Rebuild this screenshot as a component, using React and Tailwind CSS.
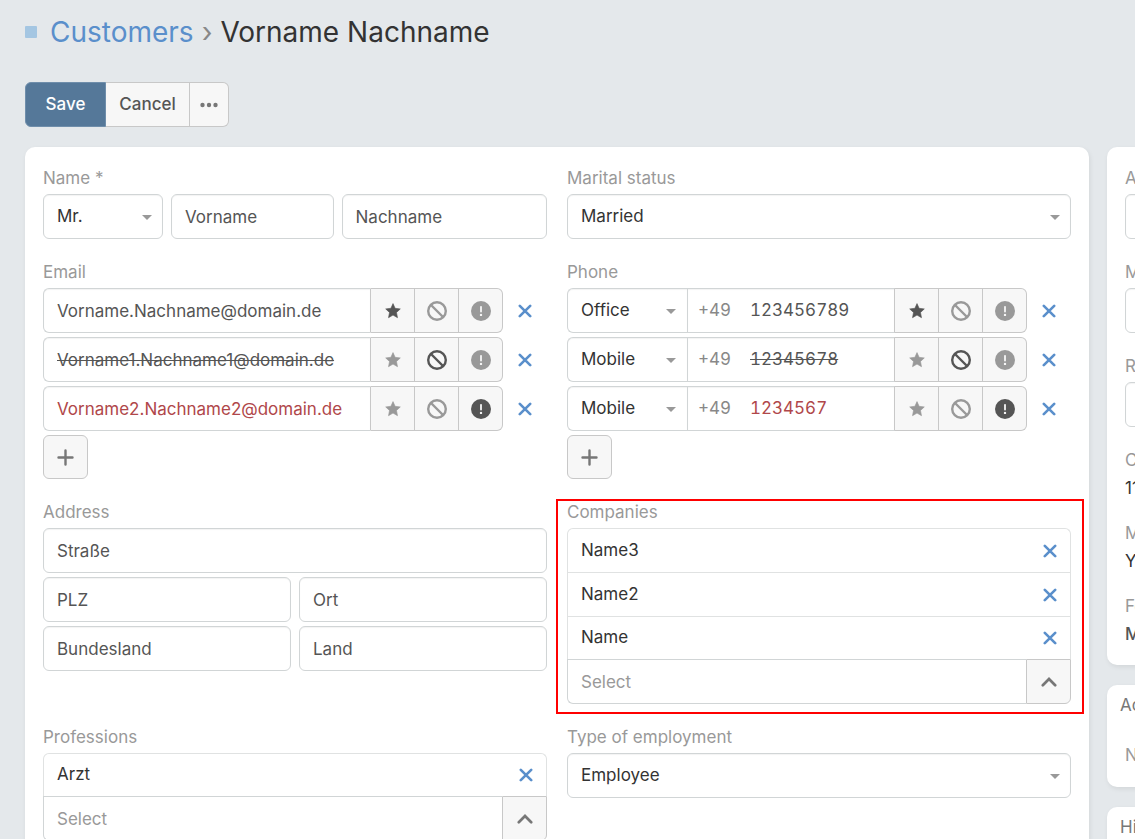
import React from "react";

const EMAILS = [
  { value: "Vorname.Nachname@domain.de", state: "primary" },
  { value: "Vorname1.Nachname1@domain.de", state: "optedOut" },
  { value: "Vorname2.Nachname2@domain.de", state: "invalid" },
];

const PHONES = [
  { type: "Office", value: "123456789", state: "primary" },
  { type: "Mobile", value: "12345678", state: "optedOut" },
  { type: "Mobile", value: "1234567", state: "invalid" },
];

const VALUE_CLS = {
  primary: "text-[#555]",
  optedOut: "text-[#555] line-through",
  invalid: "text-[#b0474a]",
};

const INPUT =
  "h-[45px] w-full min-w-0 rounded-md border border-[#d1d5d6] bg-white px-[13px] text-[#555] shadow-[inset_0_1px_1px_rgba(0,0,0,0.05)] outline-none";

/* Icons */
const StarIcon = () => (
  <svg width="18" height="18" viewBox="0 0 18 18" aria-hidden="true">
    <path
      d="M9 1.6l2.1 4.7 5.2.6-3.8 3.6 1 5.2L9 13.1l-4.5 2.6 1-5.2L1.7 6.9l5.2-.6z"
      fill="currentColor"
      stroke="currentColor"
      strokeWidth="0.6"
      strokeLinejoin="round"
    />
  </svg>
);

const BanIcon = () => (
  <svg width="20" height="20" viewBox="0 0 20 20" aria-hidden="true">
    <circle cx="10" cy="10" r="8.8" fill="none" stroke="currentColor" strokeWidth="2.4" />
    <path d="M4 4l12 12" stroke="currentColor" strokeWidth="2.4" />
  </svg>
);

const AlertIcon = () => (
  <svg width="20" height="20" viewBox="0 0 20 20" aria-hidden="true">
    <circle cx="10" cy="10" r="10" fill="currentColor" />
    <path d="M10 5.8v4.7" stroke="#f7f7f7" strokeWidth="1.8" strokeLinecap="round" />
    <circle cx="10" cy="13.9" r="1.2" fill="#f7f7f7" />
  </svg>
);

const TimesIcon = () => (
  <svg width="14" height="14" viewBox="0 0 14 14" aria-hidden="true">
    <path
      d="M1.8 1.8l10.4 10.4M12.2 1.8L1.8 12.2"
      stroke="currentColor"
      strokeWidth="2.6"
      strokeLinecap="round"
    />
  </svg>
);

const PlusIcon = () => (
  <svg width="17" height="17" viewBox="0 0 17 17" aria-hidden="true">
    <path d="M8.5 1.5v14M1.5 8.500h14" stroke="currentColor" strokeWidth="2.4" strokeLinecap="round" />
  </svg>
);

const ChevronUpIcon = () => (
  <svg width="16" height="10" viewBox="0 0 16 10" aria-hidden="true">
    <path
      d="M1.8 8.2L8 2l6.2 6.2"
      fill="none"
      stroke="currentColor"
      strokeWidth="2.7"
      strokeLinecap="round"
    />
  </svg>
);

function Field({ label, id, children }) {
  return (
    <div className="min-w-0">
      <label htmlFor={id} className="mb-1 block leading-6 text-[#999]">
        {label}
      </label>
      {children}
    </div>
  );
}

function Select({ value, className = "rounded-md", ...rest }) {
  return (
    <div className="relative">
      <select
        className={`h-[45px] w-full appearance-none border border-[#d1d5d6] bg-white px-[13px] text-[#333] shadow-[inset_0_1px_1px_rgba(0,0,0,0.05)] outline-none ${className}`}
        defaultValue={value}
        {...rest}
      >
        <option>{value}</option>
      </select>
      <svg
        className="pointer-events-none absolute top-[21px] right-[11px] text-[#999]"
        width="10"
        height="5"
        viewBox="0 0 10 5"
        aria-hidden="true"
      >
        <path d="M0 0h10L5 5z" fill="currentColor" />
      </svg>
    </div>
  );
}

function StateButtons({ state }) {
  const items = [
    { key: "primary", title: "Primary", Icon: StarIcon },
    { key: "optedOut", title: "Opted Out", Icon: BanIcon },
    { key: "invalid", title: "Invalid", Icon: AlertIcon },
  ];
  return items.map(({ key, title, Icon }) => (
    <button
      key={key}
      type="button"
      aria-label={title}
      className={`flex h-[45px] w-11 shrink-0 items-center justify-center border-y border-r border-[#c8c8c8] bg-[#f7f7f7] last:rounded-r-md ${
        key === state ? "text-[#555]" : "text-[#999]"
      }`}
    >
      <Icon />
    </button>
  ));
}

function RemoveButton({ className = "" }) {
  return (
    <button
      type="button"
      aria-label="Remove"
      className={`flex shrink-0 items-center justify-center text-[#5a8fcb] ${className}`}
    >
      <TimesIcon />
    </button>
  );
}

function AddButton({ label }) {
  return (
    <button
      type="button"
      aria-label={label}
      className="flex h-11 w-[45px] items-center justify-center rounded-md border border-[#c8c8c8] bg-[#f7f7f7] text-[#777]"
    >
      <PlusIcon />
    </button>
  );
}

function LinkMultiple({ id, items }) {
  return (
    <div>
      <ul className="rounded-t-md border-x border-t border-[#e0e2e2]">
        {items.map((name) => (
          <li
            key={name}
            className="flex h-11 items-center justify-between border-b border-[#e0e2e2] pl-[13px] text-[#333] last:h-[42px] last:border-b-0"
          >
            {name}
            <RemoveButton className="h-full w-10" />
          </li>
        ))}
      </ul>
      <div className="flex">
        <input
          id={id}
          placeholder="Select"
          className="h-[45px] min-w-0 flex-1 rounded-bl-md border border-r-0 border-[#d1d5d6] px-[13px] outline-none placeholder:text-[#999] placeholder:opacity-100"
        />
        <button
          type="button"
          aria-label="Open list"
          className="flex h-[45px] w-[45px] items-center justify-center rounded-br-md border border-[#c8c8c8] bg-[#f7f7f7] text-[#777]"
        >
          <ChevronUpIcon />
        </button>
      </div>
    </div>
  );
}

function SideValue({ label, children }) {
  return (
    <div className="leading-6">
      <div className="mb-1 text-[#999]">{label}</div>
      <div>{children}</div>
    </div>
  );
}

const CARD = "rounded-[10px] bg-white shadow-[1px_2px_5px_rgba(0,0,0,0.08)]";

export default function App() {
  return (
    <div className="h-screen overflow-hidden bg-[#e4e8eb] pl-[25px] font-['Inter',sans-serif] text-[17px] text-[#333]">
      <header className="pt-3">
        <h1 className="flex items-center text-[28px] leading-10">
          <span className="mr-[13px] size-3 rounded-[1px] bg-[#a4c6e2]" />
          <a href="#customers" className="text-[#5a8fcb]">
            Customers
          </a>
          <span className="mx-2 text-[#888]">›</span>
          Vorname Nachname
        </h1>
      </header>

      <div className="mt-[30px] mb-[20px] flex h-[45px] font-medium">
        <button type="button" className="w-[81px] rounded-l-md border border-[#6f8eab] bg-[#557899] text-white">
          Save
        </button>
        <button type="button" className="w-[84px] border-y border-r border-[#c8c8c8] bg-[#f7f7f7] text-[#555]">
          Cancel
        </button>
        <button
          type="button"
          aria-label="More actions"
          className="flex w-[39px] items-center justify-center rounded-r-md border-y border-r border-[#c8c8c8] bg-[#f7f7f7] text-[#777]"
        >
          <svg width="18" height="6" viewBox="0 0 18 6" fill="currentColor" aria-hidden="true">
            <circle cx="2.5" cy="3" r="2.2" />
            <circle cx="9" cy="3" r="2.2" />
            <circle cx="15.5" cy="3" r="2.2" />
          </svg>
        </button>
      </div>

      <div className="flex items-start gap-[18px]">
        <main className={`grid min-w-0 flex-1 grid-cols-2 gap-x-5 gap-y-[21px] px-[18px] pt-[19px] pb-5 ${CARD}`}>
          <Field label="Name *" id="firstName">
            <div className="grid grid-cols-[120px_163fr_206fr] gap-2">
              <Select value="Mr." aria-label="Salutation" />
              <input id="firstName" className={INPUT} defaultValue="Vorname" />
              <input aria-label="Last name" className={INPUT} defaultValue="Nachname" />
            </div>
          </Field>

          <Field label="Marital status" id="maritalStatus">
            <Select id="maritalStatus" value="Married" />
          </Field>

          <Field label="Email" id="email0">
            <div className="flex flex-col gap-1">
              {EMAILS.map((e, i) => (
                <div key={e.value} className="flex">
                  <input
                    id={`email${i}`}
                    aria-label={`Email ${i + 1}`}
                    defaultValue={e.value}
                    className={`h-[45px] min-w-0 flex-1 rounded-l-md border border-[#d1d5d6] border-r-[#c8c8c8] px-[13px] shadow-[inset_0_1px_1px_rgba(0,0,0,0.05)] outline-none ${VALUE_CLS[e.state]}`}
                  />
                  <div className="flex">
                    <StateButtons state={e.state} />
                  </div>
                  <RemoveButton className="w-11" />
                </div>
              ))}
              <AddButton label="Add email" />
            </div>
          </Field>

          <Field label="Phone" id="phone0">
            <div className="flex flex-col gap-1">
              {PHONES.map((p, i) => (
                <div key={p.value} className="flex">
                  <div className="w-[120px] shrink-0">
                    <Select value={p.type} aria-label={`Phone type ${i + 1}`} className="rounded-l-md border-r-0" />
                  </div>
                  <div className="flex h-[45px] min-w-0 flex-1 items-center border border-[#d1d5d6] border-r-[#c8c8c8] pl-[10px] shadow-[inset_0_1px_1px_rgba(0,0,0,0.05)] tabular-nums">
                    <span className="w-[52px] shrink-0 text-[#888]">+49</span>
                    <input
                      id={`phone${i}`}
                      aria-label={`Phone ${i + 1}`}
                      defaultValue={p.value}
                      className={`min-w-0 flex-1 outline-none ${VALUE_CLS[p.state]}`}
                    />
                  </div>
                  <div className="flex">
                    <StateButtons state={p.state} />
                  </div>
                  <RemoveButton className="w-11" />
                </div>
              ))}
              <AddButton label="Add phone" />
            </div>
          </Field>

          <Field label="Address" id="street">
            <div className="grid grid-cols-2 gap-x-2 gap-y-1">
              <div className="col-span-2">
                <input id="street" className={INPUT} defaultValue="Straße" />
              </div>
              <input aria-label="Postal code" className={INPUT} defaultValue="PLZ" />
              <input aria-label="City" className={INPUT} defaultValue="Ort" />
              <input aria-label="State" className={INPUT} defaultValue="Bundesland" />
              <input aria-label="Country" className={INPUT} defaultValue="Land" />
            </div>
          </Field>

          <div className="relative min-w-0">
            <Field label="Companies" id="companies">
              <LinkMultiple id="companies" items={["Name3", "Name2", "Name"]} />
            </Field>
            {/* highlight frame */}
            <div className="pointer-events-none absolute -top-px -right-[13px] -bottom-[10px] -left-[11px] border-2 border-[#ff0000]" />
          </div>

          <Field label="Professions" id="professions">
            <LinkMultiple id="professions" items={["Arzt"]} />
          </Field>

          <Field label="Type of employment" id="employment">
            <Select id="employment" value="Employee" />
          </Field>
        </main>

        {/* Side column, runs past the right edge of the window */}
        <aside className="flex w-7 shrink-0 flex-col gap-5">
          <section className={`flex w-[420px] flex-col gap-[21px] px-[18px] py-[19px] ${CARD}`}>
            <Field label="Assigned User" id="assignedUser">
              <input id="assignedUser" className={INPUT} />
            </Field>
            <Field label="Mandant" id="mandant">
              <input id="mandant" className={INPUT} />
            </Field>
            <Field label="Region" id="region">
              <input id="region" className={INPUT} />
            </Field>
            <SideValue label="Created">11:20</SideValue>
            <SideValue label="Modified">Yesterday</SideValue>
            <SideValue label="Followers">
              <span className="font-medium text-[#555]">Me</span>
            </SideValue>
          </section>

          <section className={`w-[420px] pt-2 pb-5 leading-6 ${CARD}`}>
            <h2 className="px-[13px] text-[#777]">Activities</h2>
            <p className="mt-[26px] px-[18px] text-[#999]">No Data</p>
          </section>

          <section className={`w-[420px] pt-2 pb-5 leading-6 ${CARD}`}>
            <h2 className="px-[13px] text-[#777]">History</h2>
            <p className="mt-[26px] px-[18px] text-[#999]">No Data</p>
          </section>
        </aside>
      </div>
    </div>
  );
}
